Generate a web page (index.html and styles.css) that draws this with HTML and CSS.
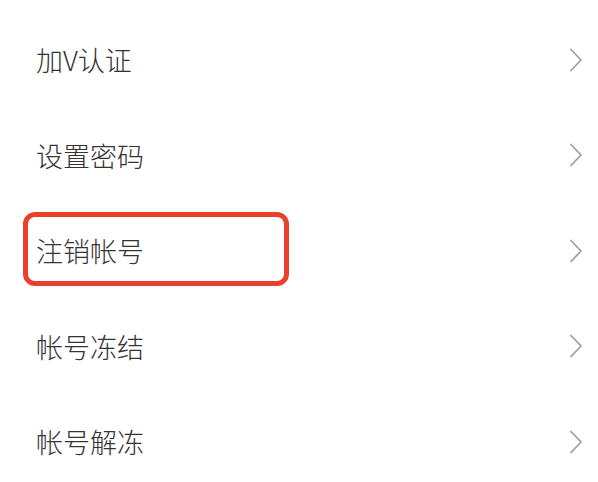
FILE: index.html
```html
<!DOCTYPE html>
<html lang="zh-CN">
<head>
<meta charset="utf-8">
<title>帐号设置</title>
<link rel="stylesheet" href="styles.css">
</head>
<body>
<ul class="menu">
  <li class="row"><span class="label">加V认证</span><svg class="chev" viewBox="0 0 14 24" width="14" height="24"><path d="M2 1.5 L12 12 L2 22.5"/></svg></li>
  <li class="row"><span class="label">设置密码</span><svg class="chev" viewBox="0 0 14 24" width="14" height="24"><path d="M2 1.5 L12 12 L2 22.5"/></svg></li>
  <li class="row"><span class="label">注销帐号</span><svg class="chev" viewBox="0 0 14 24" width="14" height="24"><path d="M2 1.5 L12 12 L2 22.5"/></svg><span class="mark"></span></li>
  <li class="row"><span class="label">帐号冻结</span><svg class="chev" viewBox="0 0 14 24" width="14" height="24"><path d="M2 1.5 L12 12 L2 22.5"/></svg></li>
  <li class="row"><span class="label">帐号解冻</span><svg class="chev" viewBox="0 0 14 24" width="14" height="24"><path d="M2 1.5 L12 12 L2 22.5"/></svg></li>
</ul>
</body>
</html>
```
FILE: styles.css
```css
html, body {
  margin: 0;
  padding: 0;
  background: #ffffff;
}
body {
  width: 598px;
  height: 482px;
  overflow: hidden;
  font-family: "Noto Sans CJK SC", "Noto Sans", sans-serif;
}
.menu {
  list-style: none;
  margin: 0;
  padding: 12px 0 0 0;
}
.row {
  position: relative;
  height: 95.5px;
  display: flex;
  align-items: center;
  justify-content: space-between;
  padding: 0 15px 0 36px;
}
.label {
  font-size: 27px;
  font-weight: 300;
  color: #333333;
  line-height: 1;
}
.chev {
  display: block;
  fill: none;
  stroke: #a0a0a0;
  stroke-width: 1.8;
  stroke-linecap: round;
  stroke-linejoin: round;
}
.mark {
  position: absolute;
  left: 23px;
  top: 9px;
  width: 266px;
  height: 74px;
  box-sizing: border-box;
  border: 5px solid #e9412b;
  border-radius: 12px;
}
```
